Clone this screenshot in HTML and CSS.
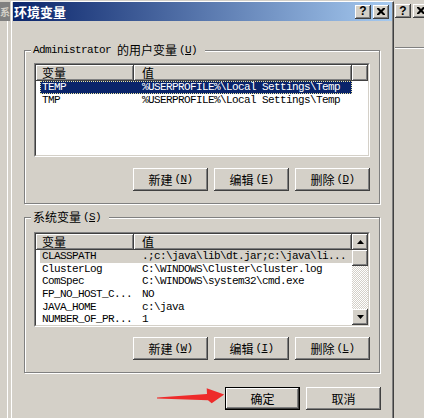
FILE: index.html
```html
<!DOCTYPE html>
<html>
<head>
<meta charset="utf-8">
<link rel="stylesheet" href="styles.css">
</head>
<body>
<div class="screen">
  <div class="bg-left">
    <div class="bg-left-title"><span class="bg-left-text">系</span></div>
    <div class="bg-left-body"></div>
  </div>

  <div class="dialog">
    <div class="titlebar">
      <span class="title">环境变量</span>
      <div class="tb-btns">
        <span class="tbb help">?</span>
        <span class="tbb"><svg width="8" height="7" viewBox="0 0 8 7"><path d="M0 0h2l2 2 2-2h2v1l-2.5 2.5L8 6v1H6L4 5 2 7H0V6l2.5-2.5L0 1z" fill="#000"/></svg></span>
      </div>
    </div>

    <div class="content">
      <div class="group g1">
        <div class="legend"><span class="m">Administrator </span><span class="c">的用户变量</span><span class="m acc">(<u>U</u>)</span></div>
        <div class="list l1">
          <div class="list-in">
            <div class="lhead"><div class="hc c1"><span class="c">变量</span></div><div class="hc c2"><span class="c">值</span></div><div class="hc fill"></div></div>
            <div class="rows">
              <div class="row sel"><span class="n">TEMP</span><span class="v">%USERPROFILE%\Local Settings\Temp</span></div>
              <div class="row"><span class="n">TMP</span><span class="v">%USERPROFILE%\Local Settings\Temp</span></div>
            </div>
          </div>
        </div>
        <div class="btnrow">
          <div class="btn"><span class="c">新建</span><span class="m acc">(<u>N</u>)</span></div>
          <div class="btn"><span class="c">编辑</span><span class="m acc">(<u>E</u>)</span></div>
          <div class="btn"><span class="c">删除</span><span class="m acc">(<u>D</u>)</span></div>
        </div>
      </div>

      <div class="group g2">
        <div class="legend"><span class="c">系统变量</span><span class="m acc">(<u>S</u>)</span></div>
        <div class="list l2">
          <div class="list-in l2in">
            <div class="lmain">
              <div class="lhead"><div class="hc c1"><span class="c">变量</span></div><div class="hc c2"><span class="c">值</span></div></div>
              <div class="rows">
                <div class="row inact"><span class="n">CLASSPATH</span><span class="v">.;c:\java\lib\dt.jar;c:\java\li...</span></div>
                <div class="row"><span class="n">ClusterLog</span><span class="v">C:\WINDOWS\Cluster\cluster.log</span></div>
                <div class="row"><span class="n">ComSpec</span><span class="v">C:\WINDOWS\system32\cmd.exe</span></div>
                <div class="row"><span class="n">FP_NO_HOST_C...</span><span class="v">NO</span></div>
                <div class="row"><span class="n">JAVA_HOME</span><span class="v">c:\java</span></div>
                <div class="row"><span class="n">NUMBER_OF_PR...</span><span class="v">1</span></div>
              </div>
            </div>
            <div class="sb">
              <div class="sbb"><svg width="7" height="4" viewBox="0 0 7 4"><path d="M3.5 0L7 4H0z" fill="#000"/></svg></div>
              <div class="thumb"></div>
              <div class="track"></div>
              <div class="sbb"><svg width="7" height="4" viewBox="0 0 7 4"><path d="M0 0h7L3.5 4z" fill="#000"/></svg></div>
            </div>
          </div>
        </div>
        <div class="btnrow">
          <div class="btn"><span class="c">新建</span><span class="m acc">(<u>W</u>)</span></div>
          <div class="btn"><span class="c">编辑</span><span class="m acc">(<u>I</u>)</span></div>
          <div class="btn"><span class="c">删除</span><span class="m acc">(<u>L</u>)</span></div>
        </div>
      </div>

      <div class="footer">
        <div class="btn default"><span class="c">确定</span></div>
        <div class="btn"><span class="c">取消</span></div>
      </div>
    </div>
  </div>

  <div class="bg-right">
    <div class="bg-right-btns">
      <span class="tbb help">?</span>
      <span class="tbb"><svg width="8" height="7" viewBox="0 0 8 7"><path d="M0 0h2l2 2 2-2h2v1l-2.5 2.5L8 6v1H6L4 5 2 7H0V6l2.5-2.5L0 1z" fill="#000"/></svg></span>
    </div>
    <div class="bg-right-line"></div>
  </div>
</div>

<svg class="arrow" width="80" height="24" viewBox="0 0 80 24">
  <path d="M7 13.6 L57 10 L56.7 4.3 L74.2 10.5 L61.7 19.3 L58 16.3 L7 14.4 Z" fill="#ee2a2a"/>
</svg>
</body>
</html>
```

FILE: styles.css
```css
* { box-sizing: border-box; }
html, body { margin: 0; padding: 0; }
body {
  width: 424px;
  height: 418px;
  overflow: hidden;
  position: relative;
  background: #d4d0c8;
  font-family: "Liberation Mono", "DejaVu Sans Mono", monospace;
  font-size: 11px;
  letter-spacing: -0.6px;
  color: #000;
}
.c {
  font-family: "Noto Sans CJK SC", "Noto Sans", sans-serif;
  font-size: 12px;
  letter-spacing: 0;
}
.acc { margin-left: 2px; }
u { text-decoration: underline; text-underline-offset: 1px; }

.screen { display: flex; height: 418px; }

/* window behind, left */
.bg-left { width: 11px; display: flex; flex-direction: column; padding-top: 2px; }
.bg-left-title {
  width: 10px; height: 19px; background: #808080;
  overflow: hidden; display: flex; align-items: center;
}
.bg-left-text {
  color: #d4d0c8;
  font: bold 10px/12px "Noto Sans CJK SC", sans-serif;
  letter-spacing: 0;
}
.bg-left-body { flex: 1; margin-left: 7px; width: 1px; background: #fff; }

/* dialog */
.dialog {
  width: 383px;
  margin-top: 1px;
  border-top: 1px solid #fff;
  border-left: 1px solid #fff;
  border-right: 1px solid #404040;
  padding-left: 1px;
  box-shadow: inset -1px 0 0 #808080;
  display: flex;
  flex-direction: column;
}
.titlebar {
  height: 19px;
  margin-right: 1px;
  background: linear-gradient(to right, #0a246a, #a6caf0);
  display: flex;
  align-items: center;
  padding-left: 1px;
}
.title {
  color: #fff;
  font: bold 13px/19px "Noto Sans CJK SC", sans-serif;
  letter-spacing: 0;
}
.tb-btns { margin-left: auto; display: flex; gap: 2px; padding-right: 3px; }
.tbb {
  width: 16px; height: 14px;
  flex: none;
  background: #d4d0c8;
  box-shadow: inset -1px -1px #404040, inset 1px 1px #fff, inset -2px -2px #808080;
  display: flex; align-items: center; justify-content: center;
  padding-bottom: 1px;
}
.tbb.help {
  font: bold 12px/14px "Liberation Sans", sans-serif;
  letter-spacing: 0;
}

.content { display: flex; flex-direction: column; padding-left: 11px; }

.group {
  position: relative;
  width: 356px;
  border: 1px solid #808080;
  box-shadow: inset 1px 1px #fff, 1px 1px #fff;
  padding: 12px 9px 12px 9px;
}
.g1 { margin-top: 29px; }
.g2 { margin-top: 13px; padding-top: 14px; }
.legend {
  position: absolute;
  left: 6px;
  top: -8px;
  height: 14px;
  line-height: 14px;
  padding: 0 8px 0 2px;
  background: #d4d0c8;
  white-space: pre;
  display: flex;
  align-items: center;
}

.list {
  width: 336px;
  border: 1px solid;
  border-color: #808080 #fff #fff #808080;
}
.l1 { height: 94px; }
.l2 { height: 95px; }
.list-in {
  height: 100%;
  border: 1px solid;
  border-color: #404040 #d4d0c8 #d4d0c8 #404040;
  background: #fff;
  overflow: hidden;
}
.l2in { display: flex; }
.lmain { width: 316px; overflow: hidden; }

.lhead { display: flex; height: 16px; }
.hc {
  height: 16px;
  background: #d4d0c8;
  box-shadow: inset -1px -1px #404040, inset 1px 1px #fff, inset -2px -2px #808080;
  line-height: 16px;
  display: flex;
  align-items: center;
}
.hc.c1 { width: 98px; padding-left: 6px; }
.hc.c2 { width: 218px; padding-left: 8px; }
.hc.fill { flex: 1; }

.rows { display: flex; flex-direction: column; }
.row {
  display: flex;
  align-items: center;
  height: 12.7px;
  line-height: 12.7px;
  margin-left: 4px;
  width: 312px;
  white-space: pre;
  overflow: hidden;
  flex: none;
}
.row .n { width: 94px; padding-left: 2px; flex: none; overflow: hidden; }
.row .v { padding-left: 8px; }
.row.sel {
  background: #0a246a;
  color: #fff;
  outline: 1px dotted #ece6a0;
  outline-offset: -1px;
}
.row.inact { background: #d4d0c8; }

.sb { width: 16px; display: flex; flex-direction: column; }
.sbb, .thumb {
  height: 16px;
  flex: none;
  background: #d4d0c8;
  box-shadow: inset -1px -1px #404040, inset 1px 1px #fff, inset -2px -2px #808080;
  display: flex; align-items: center; justify-content: center;
}
.track {
  flex: 1;
  background-color: #fff;
  background-image: conic-gradient(#d4d0c8 25%, #fff 0 50%, #d4d0c8 0 75%, #fff 0);
  background-size: 2px 2px;
}

.btnrow { display: flex; justify-content: flex-end; gap: 6px; margin-top: 11px; }
.g2 .btnrow { margin-top: 10px; }
.btn {
  width: 75px;
  height: 23px;
  background: #d4d0c8;
  box-shadow: inset -1px -1px #404040, inset 1px 1px #fff, inset -2px -2px #808080;
  display: flex;
  align-items: center;
  justify-content: center;
  white-space: pre;
  padding-bottom: 1px;
}
.btn.default { border: 1px solid #000; }

.footer {
  display: flex;
  justify-content: flex-end;
  gap: 6px;
  margin-top: 14px;
  width: 357px;
}

/* window behind, right */
.bg-right { width: 30px; padding: 4px 0 0 1px; overflow: hidden; }
.bg-right-btns { display: flex; gap: 2px; width: 60px; }
.bg-right-line { margin-top: 29px; height: 2px; width: 40px; border-top: 1px solid #808080; border-bottom: 1px solid #fff; }

.arrow { position: absolute; left: 150px; top: 384px; }
```
